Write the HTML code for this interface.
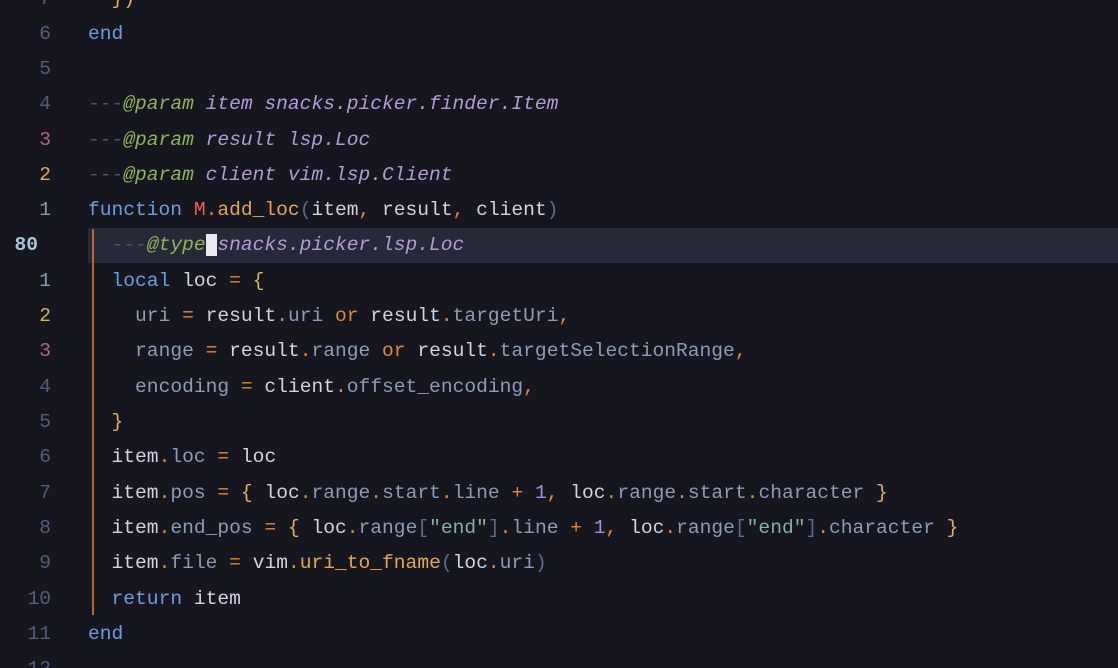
<!DOCTYPE html>
<html><head><meta charset="utf-8"><style>
html,body{margin:0;width:1118px;height:668px;overflow:hidden}
body{background:#15161e;font-family:"Liberation Mono","DejaVu Sans Mono",monospace;font-size:19.6px;color:#cdd3e6;position:relative}
.r{position:absolute;left:0;width:1118px;height:35px;line-height:35px;white-space:pre}
.n{position:absolute;left:0;width:51px;text-align:right;color:#545c7e}
.c{position:absolute;left:88px}
.cur{background:#262a38;left:88px;width:1030px}
.k{color:#6f9ce0}.o{color:#e3863b}.y{color:#e0b060}.f{color:#8d9bb8}.v{color:#cfd3e2}
.cm{color:#4a5070}.tg{color:#8fb35a;font-style:italic}.ty{color:#b49ad8;font-style:italic}
.s{color:#7fb2a8}.num{color:#a68be0}.red{color:#ef5f5f}.fn{color:#e2a65a}.p{color:#5a6a90}
.g{position:absolute;left:92px;width:2px;background:#b8652e}
</style></head><body>
<div class="r" style="top:-18px"><span class="n">7</span><span class="c">  <span class="y">})</span></span></div>
<div class="r" style="top:17px"><span class="n">6</span><span class="c"><span class="k">end</span></span></div>
<div class="r" style="top:52px"><span class="n">5</span></div>
<div class="r" style="top:87px"><span class="n">4</span><span class="c"><span class="cm">---</span><span class="tg">@param</span> <span class="ty">item snacks.picker.finder.Item</span></span></div>
<div class="r" style="top:123px"><span class="n" style="color:#b0608a">3</span><span class="c"><span class="cm">---</span><span class="tg">@param</span> <span class="ty">result lsp.Loc</span></span></div>
<div class="r" style="top:158px"><span class="n" style="color:#d8b060">2</span><span class="c"><span class="cm">---</span><span class="tg">@param</span> <span class="ty">client vim.lsp.Client</span></span></div>
<div class="r" style="top:193px"><span class="n" style="color:#7f9fb0">1</span><span class="c"><span class="k">function</span> <span class="red">M</span><span class="o">.</span><span class="fn">add_loc</span><span class="p">(</span><span class="v">item</span><span class="o">,</span> <span class="v">result</span><span class="o">,</span> <span class="v">client</span><span class="p">)</span></span></div>
<div class="r cur" style="top:228px"></div>
<div class="r" style="top:228px"><span class="n" style="width:38px;color:#a9c6d6;font-weight:bold">80</span><span class="c">  <span class="cm">---</span><span class="tg">@type</span><span style="background:#e8e8ee;color:#15161e"> </span><span class="ty">snacks.picker.lsp.Loc</span></span></div>
<div class="r" style="top:264px"><span class="n" style="color:#7f9fb0">1</span><span class="c">  <span class="k">local</span> <span class="v">loc</span> <span class="o">=</span> <span class="y">{</span></span></div>
<div class="r" style="top:299px"><span class="n" style="color:#d8b060">2</span><span class="c">    <span class="f">uri</span> <span class="o">=</span> <span class="v">result</span><span class="o">.</span><span class="f">uri</span> <span class="o">or</span> <span class="v">result</span><span class="o">.</span><span class="f">targetUri</span><span class="o">,</span></span></div>
<div class="r" style="top:334px"><span class="n" style="color:#b0608a">3</span><span class="c">    <span class="f">range</span> <span class="o">=</span> <span class="v">result</span><span class="o">.</span><span class="f">range</span> <span class="o">or</span> <span class="v">result</span><span class="o">.</span><span class="f">targetSelectionRange</span><span class="o">,</span></span></div>
<div class="r" style="top:370px"><span class="n">4</span><span class="c">    <span class="f">encoding</span> <span class="o">=</span> <span class="v">client</span><span class="o">.</span><span class="f">offset_encoding</span><span class="o">,</span></span></div>
<div class="r" style="top:405px"><span class="n">5</span><span class="c">  <span class="y">}</span></span></div>
<div class="r" style="top:440px"><span class="n">6</span><span class="c">  <span class="v">item</span><span class="o">.</span><span class="f">loc</span> <span class="o">=</span> <span class="v">loc</span></span></div>
<div class="r" style="top:476px"><span class="n">7</span><span class="c">  <span class="v">item</span><span class="o">.</span><span class="f">pos</span> <span class="o">=</span> <span class="y">{</span> <span class="v">loc</span><span class="o">.</span><span class="f">range</span><span class="o">.</span><span class="f">start</span><span class="o">.</span><span class="f">line</span> <span class="o">+</span> <span class="num">1</span><span class="o">,</span> <span class="v">loc</span><span class="o">.</span><span class="f">range</span><span class="o">.</span><span class="f">start</span><span class="o">.</span><span class="f">character</span> <span class="y">}</span></span></div>
<div class="r" style="top:511px"><span class="n">8</span><span class="c">  <span class="v">item</span><span class="o">.</span><span class="f">end_pos</span> <span class="o">=</span> <span class="y">{</span> <span class="v">loc</span><span class="o">.</span><span class="f">range</span><span class="p">[</span><span class="s">"end"</span><span class="p">]</span><span class="o">.</span><span class="f">line</span> <span class="o">+</span> <span class="num">1</span><span class="o">,</span> <span class="v">loc</span><span class="o">.</span><span class="f">range</span><span class="p">[</span><span class="s">"end"</span><span class="p">]</span><span class="o">.</span><span class="f">character</span> <span class="y">}</span></span></div>
<div class="r" style="top:546px"><span class="n">9</span><span class="c">  <span class="v">item</span><span class="o">.</span><span class="f">file</span> <span class="o">=</span> <span class="v">vim</span><span class="o">.</span><span class="fn">uri_to_fname</span><span class="p">(</span><span class="v">loc</span><span class="o">.</span><span class="f">uri</span><span class="p">)</span></span></div>
<div class="r" style="top:582px"><span class="n">10</span><span class="c">  <span class="k">return</span> <span class="v">item</span></span></div>
<div class="r" style="top:617px"><span class="n">11</span><span class="c"><span class="k">end</span></span></div>
<div class="r" style="top:652px"><span class="n">12</span></div>
<div class="g" style="top:229px;height:386px"></div>
</body></html>
